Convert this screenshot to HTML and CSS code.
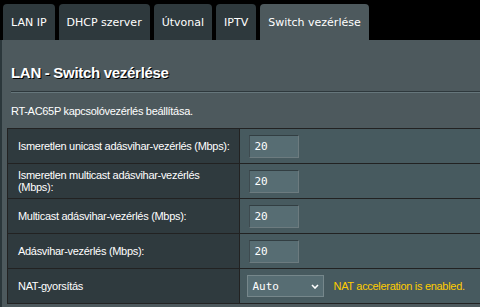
FILE: index.html
```html
<!DOCTYPE html>
<html lang="hu">

<head>
    <meta charset="UTF-8">
    <title>LAN - Switch vezérlése</title>
    <link rel="stylesheet" href="styles.css">
</head>

<body>
    <div class="tabs">
        <div class="tab">LAN IP</div>
        <div class="tab">DHCP szerver</div>
        <div class="tab">Útvonal</div>
        <div class="tab">IPTV</div>
        <div class="tab active">Switch vezérlése</div>
    </div>

    <div class="panel">
        <h1 class="title">LAN - Switch vezérlése</h1>
        <div class="split-line"></div>
        <p class="desc">RT-AC65P kapcsolóvezérlés beállítása.</p>

        <table class="form-table">
            <tr>
                <th>Ismeretlen unicast adásvihar-vezérlés (Mbps):</th>
                <td><input type="text" class="input-small" value="20"></td>
            </tr>
            <tr>
                <th>Ismeretlen multicast adásvihar-vezérlés<br>(Mbps):</th>
                <td><input type="text" class="input-small" value="20"></td>
            </tr>
            <tr>
                <th>Multicast adásvihar-vezérlés (Mbps):</th>
                <td><input type="text" class="input-small" value="20"></td>
            </tr>
            <tr>
                <th>Adásvihar-vezérlés (Mbps):</th>
                <td><input type="text" class="input-small" value="20"></td>
            </tr>
            <tr>
                <th>NAT-gyorsítás</th>
                <td>
                    <div class="select-row">
                        <div class="select-wrap">
                            <select class="input-select">
                                <option>Auto</option>
                                <option>Disable</option>
                            </select>
                            <svg class="chevron" width="8" height="5" viewBox="0 0 8 5">
                                <path d="M1 1 L4 4 L7 1" fill="none" stroke="#fff" stroke-width="1.6" />
                            </svg>
                        </div>
                        <span class="hint">NAT acceleration is enabled.</span>
                    </div>
                </td>
            </tr>
        </table>
    </div>
</body>

</html>
```

FILE: styles.css
```css
body {
    margin: 0;
    background-color: #000;
    font-family: "Liberation Sans", Arial, sans-serif;
    color: #fff;
    overflow: hidden;
}

.tabs {
    display: flex;
    gap: 4px;
    height: 36px;
    padding: 4px 0 0 3px;
}

.tab {
    display: flex;
    align-items: center;
    padding: 0 8px;
    background-color: #2e393d;
    border-radius: 4px 4px 0 0;
    font-family: "DejaVu Sans", Verdana, sans-serif;
    font-size: 11px;
    color: #fff;
}

.tab.active {
    background-color: #4d595d;
}

.panel {
    background-color: #4d595d;
    border-left: 2px solid #2b373b;
    padding: 24px 0 10px 9px;
    height: 300px;
}

.title {
    margin: 0;
    font-size: 15px;
    line-height: 18px;
    letter-spacing: -0.3px;
    font-weight: bold;
    text-shadow: 1px 1px 0 #000;
}

.split-line {
    margin-top: 9px;
    height: 1px;
    background-color: #2e383c;
    border-bottom: 1px solid #66767b;
}

.desc {
    margin: 11px 0 10px 0;
    font-size: 11px;
    line-height: 14px;
    letter-spacing: -0.3px;
}

.form-table {
    margin-left: -4px;
    width: 746px;
    border-collapse: collapse;
    border: 1px solid #222;
}

.form-table th,
.form-table td {
    height: 34px;
    border-bottom: 1px solid #222;
    font-size: 11px;
    line-height: 12px;
    letter-spacing: -0.3px;
}

.form-table th {
    width: 211px;
    padding: 0 10px;
    text-align: left;
    font-weight: normal;
    white-space: nowrap;
    background-color: #2f3a3e;
    border-right: 1px solid #222;
}

.form-table td {
    padding: 0 9px;
    background-color: #475a5f;
}

.input-small {
    display: block;
    box-sizing: border-box;
    width: 50px;
    height: 23px;
    padding: 0 4px;
    background-color: #576d73;
    border: 1px solid #6c7b7f;
    border-top-color: #323e42;
    border-left-color: #3e4b50;
    font-family: "DejaVu Sans Mono", monospace;
    font-size: 11px;
    color: #fff;
}

.select-row {
    display: flex;
    align-items: center;
}

.select-wrap {
    position: relative;
    margin-left: -2px;
}

.input-select {
    display: block;
    appearance: none;
    width: 77px;
    height: 22px;
    padding: 0 0 0 4px;
    background-color: #576d73;
    border: 1px solid #76878b;
    font-family: "DejaVu Sans Mono", monospace;
    font-size: 11px;
    color: #fff;
}

.chevron {
    position: absolute;
    right: 5px;
    top: 9px;
}

.hint {
    margin-left: 9px;
    color: #ffcc00;
    font-size: 11px;
    letter-spacing: -0.3px;
}
```
